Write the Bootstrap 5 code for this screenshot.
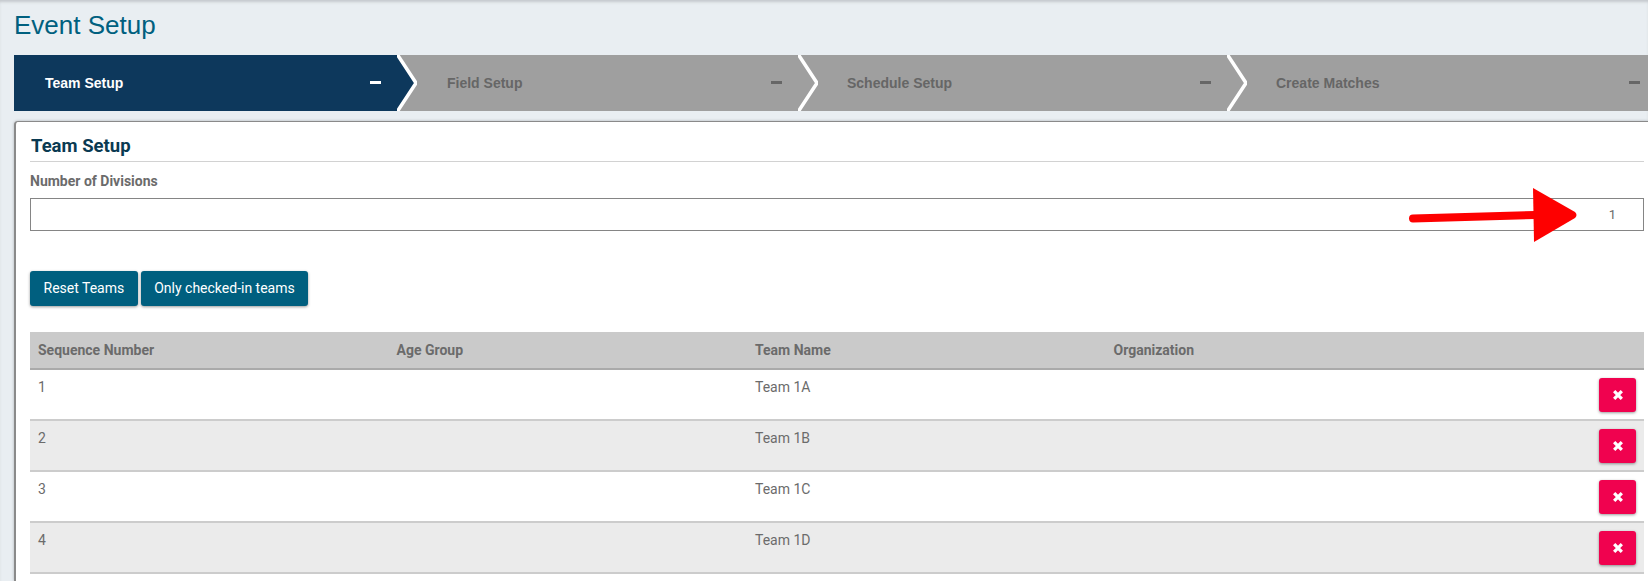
<!DOCTYPE html>
<html lang="en">
<head>
<meta charset="utf-8">
<title>Event Setup</title>
<link href="https://cdn.jsdelivr.net/npm/bootstrap@5.3.0/dist/css/bootstrap.min.css" rel="stylesheet">
<style>
html,body{height:581px;overflow:hidden}
body{background:#e9eef2;font-family:Roboto,"Liberation Sans",sans-serif;font-size:14px;color:#6b6b6b;box-shadow:inset 0 3px 3px -1px #c4c8cc;position:relative}
.page-wrap{padding:0 0 0 14px;height:581px;display:flex;flex-direction:column}
.page-title{font-family:"Liberation Sans",sans-serif;font-size:26px;font-weight:400;color:#00607f;margin:0;height:55px;padding-top:10px;line-height:30px}
.stepper{height:56px;display:flex;flex:none}
.step-item{position:relative;display:flex;align-items:center;justify-content:space-between;background:#9f9f9f;color:#666;font-family:"Liberation Sans",sans-serif;font-weight:700;font-size:14px;flex:none}
.step-one{width:383px;padding:0 16px 0 31px;background:#0d385c;color:#fff}
.step-two{width:401px;padding:0 16px 0 50px}
.step-three{width:429px;padding:0 16px 0 49px}
.step-four{flex:1 1 auto;padding:0 8px 0 49px}
.step-dash{width:11px;height:3px;background:currentColor;display:block;margin-top:-2px}
.step-chev{position:absolute;top:0;left:100%;width:20px;height:56px;z-index:2}
.panel-box{flex:1 1 auto;margin-top:10px;background:#fff;border:1px solid #8a8a8a;border-left-width:2px;border-right:0;border-bottom:0;border-radius:4px 0 0 0;padding:0 4px 0 14px;box-shadow:0 0 3px rgba(0,0,0,.25)}
.panel-head{font-size:18.5px;font-weight:700;color:#0a3a52;padding:11px 0 1px 1px;line-height:27px;margin:0;border-bottom:1px solid #d2d2d2}
.field-label{font-weight:700;font-size:14px;color:#6b6b6b;margin:10px 0 0;line-height:19px;display:block}
.num-input.form-control{height:33px;margin-top:7px;border:1px solid #858585;border-radius:0;text-align:right;padding:0 27px 0 0;font-size:13px;color:#6b6b6b;background:#fff;box-shadow:none}
.btn-teal.btn{background:#005f7f;border:0;color:#fff;font-size:14px;height:35px;padding:0 13.5px;border-radius:3px;box-shadow:0 1px 3px rgba(0,0,0,.4);line-height:35px}
.btn-row{margin-top:40px;gap:3px}
.team-tbl.table{margin:26px 0 0;table-layout:fixed;width:100%;font-size:14px;color:#6b6b6b}
.team-tbl th{background:#cacaca;color:#6b6b6b;font-weight:700;height:37px;padding:0 8px;vertical-align:middle;border-bottom:2px solid #aaa;box-shadow:none}
.team-tbl td{padding:7px 8px;height:51px;vertical-align:top;border-bottom:2px solid #ccc;line-height:21px;color:#6b6b6b;box-shadow:none;background:#fff}
.team-tbl tr:nth-child(even) td{background:#ebebeb}
.col-wide{width:358.5px}
.del-cell{text-align:right}
.team-tbl td.del-cell{padding:8px 8px 0 0}
.btn-del.btn{width:37px;height:34px;padding:0;background:#f0024f;border:0;border-radius:3px;box-shadow:0 1px 3px rgba(0,0,0,.4);display:inline-flex;align-items:center;justify-content:center}
.btn-del svg{width:12px;height:12px}
.red-arrow{position:absolute;left:1400px;top:180px;width:185px;height:66px;z-index:5}
</style>
</head>
<body>
<div class="page-wrap">
  <h1 class="page-title">Event Setup</h1>
  <div class="stepper">
    <div class="step-item step-one">
      <span>Team Setup</span><span class="step-dash"></span>
      <svg class="step-chev" viewBox="0 0 20 56"><polygon points="0,0 19,28 0,56" fill="#0d385c"/><polyline points="0,-1 19,28 0,57" fill="none" stroke="#fff" stroke-width="3.5"/></svg>
    </div>
    <div class="step-item step-two">
      <span>Field Setup</span><span class="step-dash"></span>
      <svg class="step-chev" viewBox="0 0 20 56"><polygon points="0,0 19,28 0,56" fill="#9f9f9f"/><polyline points="0,-1 19,28 0,57" fill="none" stroke="#fff" stroke-width="3.5"/></svg>
    </div>
    <div class="step-item step-three">
      <span>Schedule Setup</span><span class="step-dash"></span>
      <svg class="step-chev" viewBox="0 0 20 56"><polygon points="0,0 19,28 0,56" fill="#9f9f9f"/><polyline points="0,-1 19,28 0,57" fill="none" stroke="#fff" stroke-width="3.5"/></svg>
    </div>
    <div class="step-item step-four">
      <span>Create Matches</span><span class="step-dash"></span>
    </div>
  </div>
  <div class="panel-box">
    <h2 class="panel-head">Team Setup</h2>
    <label class="field-label" for="divs">Number of Divisions</label>
    <input id="divs" class="form-control num-input" type="text" value="1">
    <div class="d-flex btn-row">
      <button class="btn btn-teal" type="button">Reset Teams</button>
      <button class="btn btn-teal" type="button">Only checked-in teams</button>
    </div>
    <table class="table team-tbl">
      <thead>
        <tr><th class="col-wide">Sequence Number</th><th class="col-wide">Age Group</th><th class="col-wide">Team Name</th><th class="col-wide">Organization</th><th></th></tr>
      </thead>
      <tbody>
        <tr><td>1</td><td></td><td>Team 1A</td><td></td><td class="del-cell"><button class="btn btn-del" type="button" aria-label="Delete"><svg viewBox="0 0 11 11"><path d="M2 2L9 9M9 2L2 9" stroke="#fff" stroke-width="3" fill="none"/></svg></button></td></tr>
        <tr><td>2</td><td></td><td>Team 1B</td><td></td><td class="del-cell"><button class="btn btn-del" type="button" aria-label="Delete"><svg viewBox="0 0 11 11"><path d="M2 2L9 9M9 2L2 9" stroke="#fff" stroke-width="3" fill="none"/></svg></button></td></tr>
        <tr><td>3</td><td></td><td>Team 1C</td><td></td><td class="del-cell"><button class="btn btn-del" type="button" aria-label="Delete"><svg viewBox="0 0 11 11"><path d="M2 2L9 9M9 2L2 9" stroke="#fff" stroke-width="3" fill="none"/></svg></button></td></tr>
        <tr><td>4</td><td></td><td>Team 1D</td><td></td><td class="del-cell"><button class="btn btn-del" type="button" aria-label="Delete"><svg viewBox="0 0 11 11"><path d="M2 2L9 9M9 2L2 9" stroke="#fff" stroke-width="3" fill="none"/></svg></button></td></tr>
      </tbody>
    </table>
  </div>
</div>
<svg class="red-arrow" viewBox="0 0 185 66" aria-hidden="true">
  <path d="M13 38.5L135 35" stroke="#fe0000" stroke-width="8" stroke-linecap="round" fill="none"/>
  <path d="M133 8L175 32Q178 35 175 38L134 62Z" fill="#fe0000"/>
</svg>
<script src="https://cdn.jsdelivr.net/npm/bootstrap@5.3.0/dist/js/bootstrap.bundle.min.js"></script>
</body>
</html>
